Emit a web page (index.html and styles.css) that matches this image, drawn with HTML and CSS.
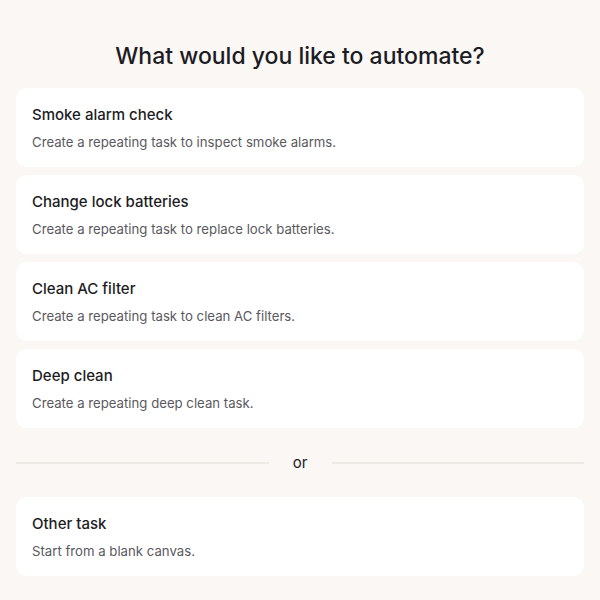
FILE: index.html
```html
<!DOCTYPE html>
<html lang="en">
<head>
<meta charset="utf-8">
<title>What would you like to automate?</title>
<link rel="stylesheet" href="styles.css">
</head>
<body>
<main class="page">
  <h1 class="heading">What would you like to automate?</h1>
  <div class="list">
    <div class="card">
      <div class="card-title">Smoke alarm check</div>
      <div class="card-desc">Create a repeating task to inspect smoke alarms.</div>
    </div>
    <div class="card">
      <div class="card-title">Change lock batteries</div>
      <div class="card-desc">Create a repeating task to replace lock batteries.</div>
    </div>
    <div class="card">
      <div class="card-title">Clean AC filter</div>
      <div class="card-desc">Create a repeating task to clean AC filters.</div>
    </div>
    <div class="card">
      <div class="card-title">Deep clean</div>
      <div class="card-desc">Create a repeating deep clean task.</div>
    </div>
    <div class="divider">
      <span class="divider-line"></span>
      <span class="divider-text">or</span>
      <span class="divider-line"></span>
    </div>
    <div class="card">
      <div class="card-title">Other task</div>
      <div class="card-desc">Start from a blank canvas.</div>
    </div>
  </div>
</main>
</body>
</html>
```

FILE: styles.css
```css
html, body {
  margin: 0;
  padding: 0;
  background: #faf7f4;
}
body {
  font-family: Inter, "Noto Sans", sans-serif;
  color: #1d1c24;
}
.page {
  padding: 41px 16px 24px;
}
.heading {
  margin: 0 0 17px;
  font-size: 23px;
  line-height: 30px;
  font-weight: 500;
  text-align: center;
  letter-spacing: 0;
}
.list {
  display: flex;
  flex-direction: column;
  gap: 8px;
}
.card {
  background: #ffffff;
  border-radius: 10px;
  padding: 17px 16px 15px;
  display: flex;
  flex-direction: column;
  gap: 7px;
}
.card-title {
  font-size: 15px;
  line-height: 20px;
  font-weight: 550;
}
.card-desc {
  font-size: 13.2px;
  line-height: 20px;
  color: #5a5960;
}
.divider {
  display: flex;
  align-items: center;
  height: 21px;
  margin: 16px 0;
}
.divider-line {
  flex: 1;
  height: 2px;
  background: #ede9e5;
}
.divider-text {
  width: 63px;
  text-align: center;
  font-size: 15px;
  color: #1d1c24;
}
```
